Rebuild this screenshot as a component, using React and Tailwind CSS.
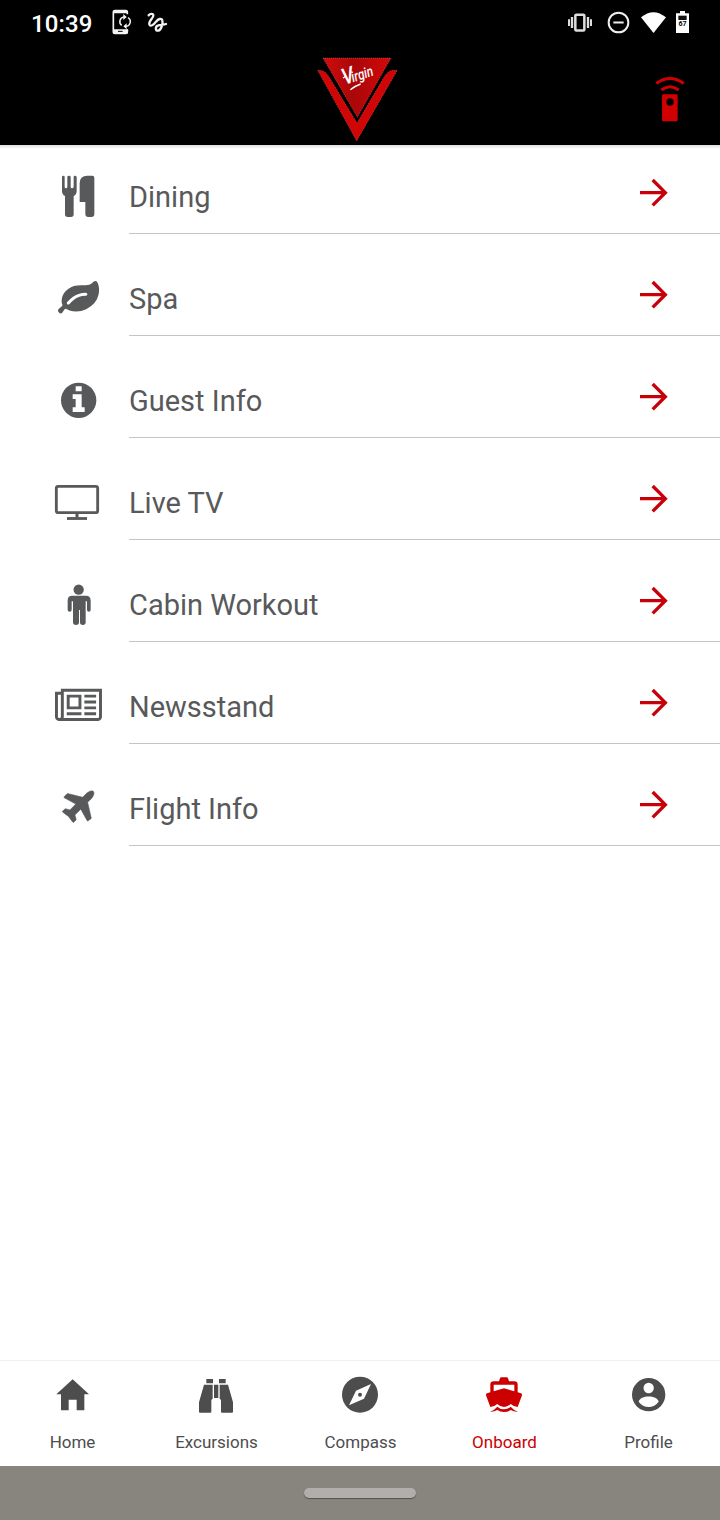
import React, { useState } from 'react'

// Status bar: clock and notifications on the left, system state on the right
function StatusBar() {
  return (
    <div className="flex h-12 items-center pl-[31px] pr-[30px] text-white">
      <span className="w-[77px] text-[24px] font-medium leading-none tracking-[0.1px]">10:39</span>
      <svg className="h-12 w-7" viewBox="324 0 84 144" fill="none">
        <path d="M382 43V37Q382 32 377 32H345Q340 32 340 37V95Q340 100 345 100H377Q382 100 382 95V88" stroke="#f4f4f4" strokeWidth="5" />
        <path d="M339 32h44v8h-44zM339 88h44v12h-44z" fill="#f4f4f4" />
        <path d="M354 94h14" stroke="#000" strokeWidth="3" />
        <path d="M365 76A14 14 0 0 1 372 51M384 53A14 14 0 0 1 377 79" stroke="#f4f4f4" strokeWidth="4.500" />
        <path d="M370 42l10 9-10 9zM380 70l-10 9 10 9z" fill="#f4f4f4" />
      </svg>
      <svg className="ml-2 h-12 w-7" viewBox="432 0 84 144" fill="none">
        <path d="M446 46C450 41 460 39 460 46C461 54 445 64 448 73C451 81 461 75 468 65C475 56 485 54 487 61C490 70 483 91 475 92C466 93 465 81 473 77C480 73 490 76 498 72" stroke="#f2f2f2" strokeWidth="7" strokeLinecap="round" />
      </svg>
      <div className="ml-auto flex">
        <svg className="h-12 w-7" viewBox="78 0 84 144" fill="none" stroke="#ddd">
          <rect x="106" y="44.500" width="27" height="47" rx="3" strokeWidth="7.500" />
          <path d="M96 51v33M144 51v33" strokeWidth="7" />
          <path d="M87 58v20M153 58v20" strokeWidth="6" />
        </svg>
        <svg className="ml-3 h-12 w-[25px]" viewBox="198 0 75 144" fill="none" stroke="#eee">
          <circle cx="235.500" cy="67.500" r="29.500" strokeWidth="6" />
          <path d="M220 67.500h31" strokeWidth="6" />
        </svg>
        <svg className="ml-[9px] h-12 w-[27px]" viewBox="300 0 81 144" fill="#fff">
          <path d="M303 52Q340 21 378 52L340.500 99z" />
        </svg>
        <svg className="ml-2 h-12 w-[15px]" viewBox="405 0 45 144">
          <path d="M408 40h12v-7h15v7h12v59h-39z" fill="#fff" />
          <path d="M415 47h25v13h-25z" fill="#111" />
          <text x="427.500" y="78" textAnchor="middle" fontSize="21" fontWeight="700" fill="#000">67</text>
        </svg>
      </div>
    </div>
  )
}

function VirginLogo() {
  return (
    <svg className="h-[90px] w-[90px]" viewBox="36 27 270 270">
      <defs>
        <linearGradient id="logoShade" x1="0" y1="0" x2="1" y2="0">
          <stop offset="0" stopColor="#d20d0d" />
          <stop offset="0.45" stopColor="#a90709" />
          <stop offset="1" stopColor="#d50808" />
        </linearGradient>
      </defs>
      <path d="M69 39H273L172 217z" fill="url(#logoShade)" />
      <path d="M53 76Q68 75 77 83Q84 89 91 102L171 234L250 100Q264 76 280 76H292L170 288z" fill="#d00505" />
      <path d="M69 39H273L172 217zM53 76Q68 75 77 83Q84 89 91 102L171 234L250 100Q264 76 280 76H292L170 288z" fill="none" stroke="#ff9c8c" strokeWidth="1.500" strokeDasharray="2 4" />
      <g transform="translate(137 119) rotate(-18)">
        <text className="italic" fontWeight="500" fill="#fff">
          <tspan x="-4" fontSize="68" textLength="36" lengthAdjust="spacingAndGlyphs">V</tspan>
          <tspan x="23" fontSize="44" textLength="67" lengthAdjust="spacingAndGlyphs">irgin</tspan>
        </text>
      </g>
      <path d="M151 134Q163 124 182 117M129 99l10-6" fill="none" stroke="#fff" strokeWidth="4" />
    </svg>
  )
}

function AppHeader() {
  return (
    <header className="flex h-[97px] items-start pl-[312px] pr-[30px]">
      <div className="pt-1.5">
        <VirginLogo />
      </div>
      <button className="ml-auto pt-6" aria-label="Remote">
        <svg className="h-[54px] w-10" viewBox="330 216 120 162" fill="none">
          <path d="M349 250Q390 221 431 250" stroke="#d00000" strokeWidth="9.500" />
          <path d="M364 270Q390 250 416 270" stroke="#d00000" strokeWidth="9" />
          <path d="M370 283h39q4 0 4 4v73q0 4-4 4h-39q-4 0-4-4v-73q0-4 4-4z" fill="#d00000" />
          <circle cx="390" cy="306" r="11" fill="#000" />
        </svg>
      </button>
    </header>
  )
}

function DiningIcon() {
  return (
    <svg className="h-16 w-16" viewBox="24 30 192 192" fill="currentColor">
      <path d="M66 51q0-4 4-4t4 4v30q0 4 4 4t4-4V51q0-4 5-4t5 4v30q0 4 4 4t5-4V51q0-4 4-4t5 4v43q0 10-9 14v55q0 8-8 8H83q-8 0-8-8v-55q-9-4-9-14z" />
      <path d="M119 126V70q0-23 23-23h15q6 0 6 6v109q0 9-9 9h-9q-9 0-9-9v-36z" />
    </svg>
  )
}

function LeafIcon() {
  return (
    <svg className="h-16 w-16" viewBox="24 336 192 192" fill="currentColor">
      <g transform="translate(54 354.500) scale(0.0688)">
        <path d="M1280 704q0-26-19-45t-45-19q-172 0-318 49.500t-259.500 134-235.500 219.500q-19 21-19 45 0 26 19 45t45 19q24 0 45-19 27-24 74-71t67-66q137-124 268.500-176t313.500-52q26 0 45-19t19-45zm512-198q0 95-20 193-46 224-184.500 383t-357.500 268q-214 108-438 108-148 0-286-47-15-5-88-42t-96-37q-16 0-39.500 32t-45 70-52.500 70-60 32q-43 0-63.500-17.500t-45.500-59.500q-2-4-6-11t-5.500-10-3-9.500-1.500-13.500q0-35 31-73.500t68-65.500 68-56 31-48q0-4-14-38t-16-44q-9-51-9-104 0-115 43.500-220t119-184.500 170.500-139 204-95.500q55-18 145-25.500t179.500-9 178.500-6 163.500-24 113.500-56.500l29.500-29.500 29.500-28 27-20 36.500-16 43.500-4.500q39 0 70.500 46t47.500 112 24 124 8 96z" />
      </g>
    </svg>
  )
}

function InfoIcon() {
  return (
    <svg className="h-16 w-16" viewBox="24 12 192 192">
      <circle cx="116" cy="91" r="53" fill="currentColor" />
      <path d="M107 49h18v15h-18zM98 73h27v39h9v14H98v-14h9V87h-9z" fill="#fff" />
    </svg>
  )
}

function TvIcon() {
  return (
    <svg className="h-16 w-16" viewBox="24 318 192 192" fill="none" stroke="currentColor">
      <rect x="49" y="349" width="124" height="79" rx="6" strokeWidth="8.500" />
      <path d="M111 431v12" strokeWidth="9" />
      <path d="M81 445.500h60" strokeWidth="8.500" />
    </svg>
  )
}

function PersonIcon() {
  return (
    <svg className="h-16 w-16" viewBox="24 24 192 192" fill="currentColor">
      <circle cx="116" cy="59" r="15.500" />
      <path d="M94 77h44q14 0 14 15v27q0 6-5.500 6t-5.500-6V94h-4v63q0 8-8.500 8t-8.500-8v-37h-3v37q0 8-9 8t-9-8V94h-4v25q0 6-6 6t-6-6V92q0-15 13-15z" />
    </svg>
  )
}

function NewspaperIcon() {
  return (
    <svg className="h-16 w-16" viewBox="24 330 192 192" fill="currentColor">
      <g transform="translate(45 347.500) scale(0.0688)">
        <path d="M1024 512H640v384h384V512zm128 640v128H512v-128h640zm0-768v640H512V384h640zm640 768v128h-512v-128h512zm0-256v128h-512V896h512zm0-256v128h-512V640h512zm0-256v128h-512V384h512zM256 1344V384H128v960q0 26 19 45t45 19 45-19 19-45zm1664 0V256H384v1088q0 33-11 64h1483q26 0 45-19t19-45zm128-1216v1216q0 80-56 136t-136 56H192q-80 0-136-56T0 1344V256h256V128h1792z" />
      </g>
    </svg>
  )
}

function PlaneIcon() {
  return (
    <svg className="h-16 w-16" viewBox="24 636 192 192" fill="currentColor">
      <g transform="translate(54.500 653.500) scale(0.0675)">
        <path d="M1568 160q44 52 12 148t-108 172l-161 161 160 696q5 19-12 33l-128 96q-7 6-19 6-4 0-7-1-15-3-21-16l-279-508-259 259 53 194q5 17-8 31l-96 96q-9 9-23 9h-2q-15-2-24-13l-189-252-252-189q-11-7-13-23-1-13 9-25l96-97q9-9 23-9 6 0 8 1l194 53 259-259-508-279q-14-8-17-24-2-16 9-27l128-128q14-13 30-8l665 159 160-160q76-76 172-108t148 12z" stroke="currentColor" strokeWidth="24" />
      </g>
    </svg>
  )
}

function ArrowIcon() {
  return (
    <svg className="h-16 w-12 text-[#c80009]" viewBox="36 30 144 192" fill="none" stroke="currentColor" strokeWidth="10">
      <path d="M60 98h76M98 60l38 38-38 38" />
    </svg>
  )
}

function HomeIcon() {
  return (
    <svg className="size-12" viewBox="144 60 144 144" fill="currentColor">
      <path d="M218 88l49 45h-14v48h-23v-32h-24v32h-23v-48h-14z" />
    </svg>
  )
}

function BinocularsIcon() {
  return (
    <svg className="size-12" viewBox="576 60 144 144" fill="currentColor">
      <path d="M619 87h20v13h-20zM657 87h20v13h-20zM642 104h13v40h-13z" />
      <path d="M612 104h26v42q-4 2-4 6v33q0 3-3 3h-31q-3 0-3-3v-28zM684 104h-25v42q4 2 4 6v33q0 3 3 3h30q3 0 3-3v-28z" />
    </svg>
  )
}

function CompassIcon() {
  return (
    <svg className="size-12" viewBox="138 60 144 144">
      <circle cx="210" cy="134" r="54" fill="currentColor" />
      <path d="M243 102L222 146L177 166L198 122z" fill="#fff" />
      <circle cx="210" cy="134" r="6" fill="currentColor" />
    </svg>
  )
}

function BoatIcon() {
  return (
    <svg className="size-12" viewBox="570 60 144 144" fill="currentColor">
      <path fillRule="evenodd" d="M627 94l3-9q1-3 4-3h16q3 0 4 3l3 9h16q10 0 10 10v23l10 3q4 2 3 6l-13 35q-10 0-21-9q-9 9-20 9t-20-9q-11 9-21 9l-13-35q-1-4 3-6l10-3v-23q0-10 10-10zM611 104v20l31-9 31 9v-20z" />
      <path d="M600 185q12-3 22-15q8 8 20 8t20-8q10 12 22 15q-12 1-22-5q-8 6-20 6t-20-6q-10 6-22 5z" />
    </svg>
  )
}

function ProfileIcon() {
  return (
    <svg className="size-12" viewBox="1002 60 144 144">
      <circle cx="1076" cy="134" r="50" fill="currentColor" />
      <circle cx="1076" cy="114" r="15.500" fill="#fff" />
      <path d="M1046 155C1050 134 1102 134 1106 155C1092 176 1060 176 1046 155z" fill="#fff" />
    </svg>
  )
}

const menuItems = [
  { name: 'Dining', icon: DiningIcon },
  { name: 'Spa', icon: LeafIcon },
  { name: 'Guest Info', icon: InfoIcon },
  { name: 'Live TV', icon: TvIcon },
  { name: 'Cabin Workout', icon: PersonIcon },
  { name: 'Newsstand', icon: NewspaperIcon },
  { name: 'Flight Info', icon: PlaneIcon },
]

const tabs = [
  { name: 'Home', icon: HomeIcon },
  { name: 'Excursions', icon: BinocularsIcon },
  { name: 'Compass', icon: CompassIcon },
  { name: 'Onboard', icon: BoatIcon },
  { name: 'Profile', icon: ProfileIcon },
]

function App() {
  const [activeTab, setActiveTab] = useState('Onboard')

  return (
    <div className="flex h-[1520px] w-[720px] flex-col overflow-hidden bg-white font-[Roboto,sans-serif]">
      <div className="h-[145px] bg-black">
        <StatusBar />
        <AppHeader />
      </div>

      {/* Menu list */}
      <main className="flex-1">
        <div className="h-1 bg-linear-to-b from-[#dedede] to-white" />
        <ul className="-mt-[17px]">
          {menuItems.map(({ name, icon: Icon }) => (
            <li key={name} className="flex h-[102px] items-end pl-12 text-[#58595b]">
              <Icon />
              <div className="ml-[17px] flex h-16 flex-1 items-center justify-between border-b border-[#c4c4c4] pr-10">
                <span className="pb-2.5 text-[29px] leading-9">{name}</span>
                <ArrowIcon />
              </div>
            </li>
          ))}
        </ul>
      </main>

      {/* Bottom tabs */}
      <nav className="grid h-[106px] grid-cols-5 border-t border-[#f0f0f0]">
        {tabs.map(({ name, icon: Icon }) => (
          <button
            key={name}
            onClick={() => setActiveTab(name)}
            className={`flex flex-col items-center pt-[9px] ${activeTab === name ? 'text-[#cc0000]' : 'text-[#4d4d4d]'}`}
          >
            <Icon />
            <span className="mt-3 pl-px text-[17px] leading-6">{name}</span>
          </button>
        ))}
      </nav>

      <div className="flex h-[54px] justify-center bg-[#88847e] pt-[22px]">
        <div className="h-2.5 w-28 rounded-full bg-[#b0afac] shadow-[0_1px_1px_#55524e]" />
      </div>
    </div>
  )
}

export default App
